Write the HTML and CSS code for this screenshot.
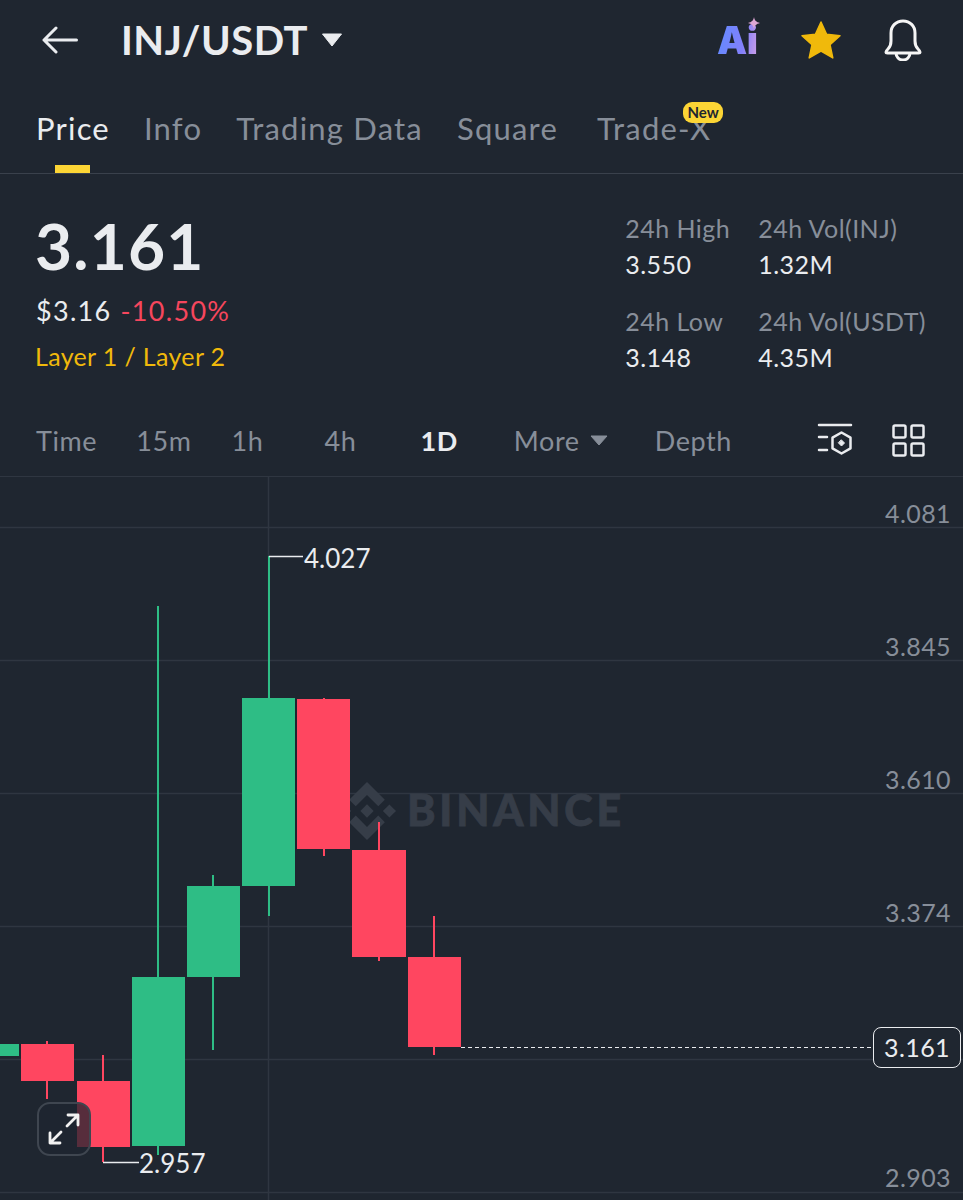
FILE: index.html
```html
<!DOCTYPE html>
<html lang="en">
<head>
<meta charset="utf-8">
<title>INJ/USDT</title>
<link rel="stylesheet" href="styles.css">
</head>
<body>
<div class="app">
  <header class="top">
    <svg class="back" width="36" height="28" viewBox="0 0 36 28"><path d="M34.500 14H2M14 2 2 14l12 12" fill="none" stroke="#eaecef" stroke-width="3" stroke-linecap="round" stroke-linejoin="round"/></svg>
    <h1 class="pair">INJ/USDT</h1>
    <svg class="caret" width="22" height="14" viewBox="0 0 22 14"><path d="M1.500 1h19L11 13z" fill="#eaecef" stroke="#eaecef" stroke-linejoin="round"/></svg>
    <div class="actions">
      <div class="ai"><span class="ai-text">Ai</span>
        <svg class="spark" width="12" height="12" viewBox="0 0 12 12"><path d="M6 0c.6 3.500 2.200 5 6 6-3.800 1-5.400 2.500-6 6-.6-3.500-2.200-5-6-6 3.800-1 5.400-2.500 6-6z" fill="#dfa8d6"/></svg>
      </div>
      <svg width="42" height="40" viewBox="0 0 42 40"><path d="M21 2l5.600 12.200 13.400 1.500-10 9 2.800 13.200L21 31.200 9.200 37.900 12 24.700l-10-9 13.400-1.500z" fill="#f0b90b" stroke="#f0b90b" stroke-width="1.500" stroke-linejoin="round"/></svg>
      <svg width="40" height="42" viewBox="0 0 40 42"><path d="M3 33c0-1 1-2 2-3 2-2 3-4 3-8v-8C8 7 13 2 20 2s12 5 12 12v8c0 4 1 6 3 8 1 1 2 2 2 3 0 .8-.5 1-1.500 1h-31C3.500 34 3 33.800 3 33zM13 34c0 4 3 7 7 7s7-3 7-7" fill="none" stroke="#f5f5f5" stroke-width="3" stroke-linejoin="round"/></svg>
    </div>
  </header>

  <nav class="tabs">
    <a class="tab tab-active">Price</a>
    <a class="tab">Info</a>
    <a class="tab">Trading Data</a>
    <a class="tab">Square</a>
    <a class="tab tab-new">Trade-X<span class="badge">New</span></a>
  </nav>

  <section class="stats">
    <div class="quote">
      <div class="last">3.161</div>
      <div class="fiat"><span>$3.16</span><span class="down">-10.50%</span></div>
      <div class="tag">Layer 1 / Layer 2</div>
    </div>
    <div class="metrics">
      <div class="metric"><span class="k">24h High</span><span class="v">3.550</span></div>
      <div class="metric"><span class="k">24h Vol(INJ)</span><span class="v">1.32M</span></div>
      <div class="metric"><span class="k">24h Low</span><span class="v">3.148</span></div>
      <div class="metric"><span class="k">24h Vol(USDT)</span><span class="v">4.35M</span></div>
    </div>
  </section>

  <nav class="frames">
    <span class="fr fr-time">Time</span>
    <span class="fr fr-15">15m</span>
    <span class="fr fr-1h">1h</span>
    <span class="fr fr-4h">4h</span>
    <span class="fr fr-1d">1D</span>
    <span class="fr fr-more">More<svg width="18" height="11" viewBox="0 0 18 11"><path d="M1 1h16L9 10z" fill="#878e99" stroke="#878e99" stroke-linejoin="round"/></svg></span>
    <span class="fr fr-depth">Depth</span>
    <span class="tools">
      <svg width="36" height="34" viewBox="0 0 36 34" fill="none" stroke="#eaecef" stroke-width="2.500" stroke-linecap="round" stroke-linejoin="round"><path d="M2 2h32M2 14h8M2 27h8"/><path d="M24.500 9.500l9 5.200v10.600l-9 5.200-9-5.200V14.700z"/><path d="M24.500 17l3 3-3 3-3-3z" fill="#eaecef" stroke-width="1"/></svg>
      <svg width="33" height="33" viewBox="0 0 33 33" fill="none" stroke="#eaecef" stroke-width="2.500" stroke-linejoin="round"><rect x="1.500" y="1.500" width="12" height="12" rx="1.500"/><rect x="19.500" y="1.500" width="12" height="12" rx="1.500"/><rect x="1.500" y="19.500" width="12" height="12" rx="1.500"/><rect x="19.500" y="19.500" width="12" height="12" rx="1.500"/></svg>
    </span>
  </nav>

  <main class="chart">
    <svg class="plot" width="963" height="723" viewBox="0 477 963 723">
      <g stroke="#2f3641" stroke-width="1.500">
        <path d="M0 527.500H963M0 660.500H963M0 793.500H963M0 926.500H963M0 1059.500H963M0 1192.500H963M268.500 477V1200"/>
      </g>
      <g fill="#363d48" transform="translate(338 782) scale(.458)">
        <path d="m38.730 53.200 24.590-24.580 24.600 24.600 14.300-14.310L63.320 0 24.420 38.900z"/>
        <path d="m0 63.310 14.300-14.310 14.310 14.310-14.310 14.300z"/>
        <path d="m38.730 73.410 24.590 24.590 24.600-24.600 14.310 14.290-38.900 38.910-38.910-38.880z"/>
        <path d="m98 63.310 14.300-14.310 14.310 14.300-14.310 14.320z"/>
        <path d="m77.830 63.300-14.510-14.520-14.510 14.520 14.510 14.500z"/>
      </g>
      <g fill="#2ebd85">
        <rect x="-34" y="1044" width="53" height="12"/>
        <rect x="157" y="606" width="2" height="549"/><rect x="132" y="977" width="53" height="169"/>
        <rect x="212" y="875" width="2" height="175"/><rect x="187" y="886" width="53" height="91"/>
        <rect x="268" y="556" width="2" height="360"/><rect x="242" y="698" width="53" height="188"/>
      </g>
      <g fill="#ff4660">
        <rect x="46" y="1041" width="2" height="58"/><rect x="21" y="1044" width="53" height="37"/>
        <rect x="102" y="1055" width="2" height="107"/><rect x="77" y="1081" width="53" height="66"/>
        <rect x="323" y="698" width="2" height="158"/><rect x="297" y="699" width="53" height="150"/>
        <rect x="378" y="822" width="2" height="139"/><rect x="352" y="850" width="54" height="107"/>
        <rect x="433" y="916" width="2" height="139"/><rect x="408" y="957" width="53" height="90"/>
      </g>
      <path d="M269 556.500h34M103 1162.500h36" stroke="#eaecef" stroke-width="1.300" fill="none"/>
      <path d="M461 1047.500H873" stroke="#eaecef" stroke-width="1" stroke-dasharray="4 3" fill="none"/>
    </svg>
    <span class="wm">BINANCE</span>
    <span class="axis a1">4.081</span>
    <span class="axis a2">3.845</span>
    <span class="axis a3">3.610</span>
    <span class="axis a4">3.374</span>
    <span class="axis a5">2.903</span>
    <span class="mark m-hi">4.027</span>
    <span class="mark m-lo">2.957</span>
    <span class="now">3.161</span>
    <button class="expand" type="button" aria-label="Expand">
      <svg width="34" height="34" viewBox="0 0 34 34" fill="none" stroke="#f2f2f2" stroke-width="2.800" stroke-linecap="round" stroke-linejoin="round"><path d="M20 14 31 3M21 3h10v10M14 20 3 31M3 21v10h10"/></svg>
    </button>
  </main>
</div>
</body>
</html>
```
FILE: styles.css
```css
* { box-sizing: border-box; margin: 0; padding: 0; }
html, body { background: #1f2630; }
body { font-family: "Lato", "Open Sans", sans-serif; color: #eaecef; }
.app { width: 963px; height: 1200px; overflow: hidden; display: flex; flex-direction: column; background: #1f2630; }

.top { height: 84px; display: flex; align-items: center; padding: 0 40px 4px 42px; }
.back { flex: none; }
.pair { font-size: 40px; font-weight: 700; line-height: 1; margin-left: 43px; letter-spacing: .5px; color: #eaecef; }
.caret { margin-left: 13px; }
.actions { margin-left: auto; display: flex; align-items: center; gap: 41px; }
.ai { position: relative; width: 42px; height: 40px; display: flex; align-items: flex-end; }
.ai-text { font-family: "Inter", "Lato", sans-serif; font-size: 38px; line-height: 40px; font-weight: 900; letter-spacing: -.5px; background: linear-gradient(100deg, #5f8bff, #8380fa 65%, #cfa0e6); -webkit-background-clip: text; background-clip: text; color: transparent; }
.spark { position: absolute; right: -1px; top: -3px; }

.tabs { height: 90px; display: flex; gap: 34px; padding: 0 0 0 36px; border-bottom: 1.500px solid #3a414c; font-size: 31px; letter-spacing: 1.200px; color: #878e99; }
.tab { position: relative; display: block; padding-top: 24px; line-height: 40px; }
.tab-active { color: #eaecef; }
.tab-active::after { content: ""; position: absolute; left: 19px; bottom: 0; width: 35px; height: 8px; background: #fcd535; }
.tab-new { margin-left: 5px; }
.badge { position: absolute; right: -12px; top: 18px; height: 21px; padding: 0 4.500px; border-radius: 9px; background: #fcd535; color: #1f2630; font-size: 15px; font-weight: 700; line-height: 21px; letter-spacing: 0; }

.stats { height: 226px; display: flex; justify-content: space-between; padding: 0 37px 0 36px; }
.last { font-size: 64px; font-weight: 700; line-height: 64px; margin: 40px 0 0 -1px; letter-spacing: 1.200px; }
.fiat { display: flex; gap: 9px; font-size: 27px; line-height: 32px; margin-top: 17px; letter-spacing: 1.300px; }
.down { color: #f6465d; }
.tag { font-size: 25px; line-height: 30px; color: #f0b90b; margin: 14px 0 0 -1px; letter-spacing: .35px; }
.metrics { display: grid; grid-template-columns: 133px auto; grid-auto-rows: 93px; margin-top: 36px; letter-spacing: .45px; }
.metric { display: flex; flex-direction: column; font-size: 25px; line-height: 36px; }
.k { color: #878e99; }

.frames { position: relative; height: 77px; flex: none; display: flex; align-items: center; padding: 4px 38px 0 36px; border-bottom: 1.500px solid #2f3641; font-size: 27px; letter-spacing: .6px; color: #878e99; }
.fr { display: inline-flex; align-items: center; gap: 10px; }
.fr-15 { margin-left: 39px; }
.fr-1h { margin-left: 40px; }
.fr-4h { margin-left: 61px; }
.fr-1d { margin-left: 64px; color: #eaecef; font-weight: 700; }
.fr-more { margin-left: 56px; }
.fr-depth { margin-left: 47px; }
.tools { margin-left: auto; display: flex; gap: 39px; align-items: center; }

.chart { position: relative; flex: 1; overflow: hidden; }
.plot { position: absolute; left: 0; top: 0; display: block; }
.wm { position: absolute; left: 407px; top: 308px; font-size: 43px; line-height: 50px; font-weight: 900; letter-spacing: 3.800px; -webkit-text-stroke: .8px #363d48; color: #363d48; }
.axis { position: absolute; right: 12px; font-size: 25px; line-height: 30px; letter-spacing: .4px; color: #878e99; }
.a1 { top: 21px; }
.a2 { top: 154px; }
.a3 { top: 287px; }
.a4 { top: 420px; }
.a5 { top: 685px; }
.mark { position: absolute; font-size: 26px; line-height: 30px; color: #eaecef; }
.m-hi { left: 304px; top: 66px; }
.m-lo { left: 139px; top: 671px; }
.now { position: absolute; left: 873px; top: 550px; width: 88px; height: 41px; border: 1.500px solid #eaecef; border-radius: 8px; background: #1f2630; font-size: 25px; line-height: 38px; letter-spacing: .4px; text-align: center; color: #eaecef; }
.expand { position: absolute; left: 37px; top: 625px; width: 54px; height: 54px; border: 2px solid #3f4650; border-radius: 13px; background: rgba(31,38,48,.75); display: flex; align-items: center; justify-content: center; }
```
